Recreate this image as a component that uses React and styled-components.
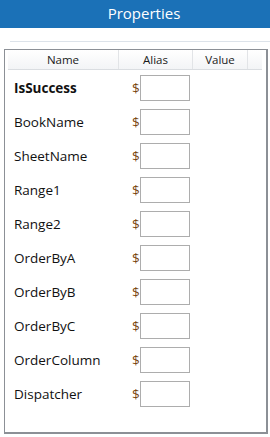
import React from 'react';
import styled, { createGlobalStyle } from 'styled-components';

const GlobalStyle = createGlobalStyle`
  html, body { margin: 0; padding: 0; background: #fff; }
  body { width: 270px; height: 437px; overflow: hidden; font-family: "Open Sans", "Noto Sans", sans-serif; }
`;

const Page = styled.div`
  width: 270px;
  height: 437px;
  display: flex;
  flex-direction: column;
`;

const TitleBar = styled.div`
  height: 28px;
  background: #1b71b7;
  color: #fff;
  font-size: 15px;
  line-height: 26px;
  display: flex;
  justify-content: center;
  padding-left: 18px;
`;

const Rule = styled.div`
  margin: 13px 0 0 10px;
  height: 1px;
  background: #dde3ea;
`;

const Frame = styled.div`
  margin: 7px 0 0 4px;
  width: 261px;
  height: 382px;
  border: 1px solid #8c9096;
  border-width: 1px 2px 2px 1px;
  display: flex;
  flex-direction: column;
`;

const Header = styled.div`
  margin-left: 3px;
  width: 254px;
  height: 19px;
  display: grid;
  grid-template-columns: 111px 74px 55px 1fr;
  background: linear-gradient(#ffffff, #f3f4f6);
  border-bottom: 1px solid #dadde1;
`;

const HeaderCell = styled.div`
  font-size: 11.5px;
  line-height: 19px;
  color: #1a1a1a;
  text-align: center;
  border-right: ${p => (p.last ? 'none' : '1px solid #e2e4e7')};
`;

const Rows = styled.div`
  display: flex;
  flex-direction: column;
  gap: 8px;
  padding: 5px 0 0 9px;
`;

const Row = styled.div`
  display: flex;
  align-items: center;
  height: 26px;
`;

const Label = styled.div`
  width: 118px;
  font-size: 13.5px;
  font-weight: ${p => (p.bold ? 700 : 400)};
  color: #111;
`;

const Dollar = styled.span`
  width: 8px;
  font-size: 13.5px;
  color: #7a4710;
`;

const Box = styled.div`
  width: 48px;
  height: 24px;
  border: 1px solid #adadad;
  background: #fff;
`;

const props = [
  'IsSuccess', 'BookName', 'SheetName', 'Range1', 'Range2',
  'OrderByA', 'OrderByB', 'OrderByC', 'OrderColumn', 'Dispatcher',
];

export default function App() {
  return (
    <Page>
      <GlobalStyle />
      <TitleBar>Properties</TitleBar>
      <Rule />
      <Frame>
        <Header>
          <HeaderCell>Name</HeaderCell>
          <HeaderCell>Alias</HeaderCell>
          <HeaderCell>Value</HeaderCell>
          <HeaderCell last />
        </Header>
        <Rows>
          {props.map((name, i) => (
            <Row key={name}>
              <Label bold={i === 0}>{name}</Label>
              <Dollar>$</Dollar>
              <Box />
            </Row>
          ))}
        </Rows>
      </Frame>
    </Page>
  );
}
